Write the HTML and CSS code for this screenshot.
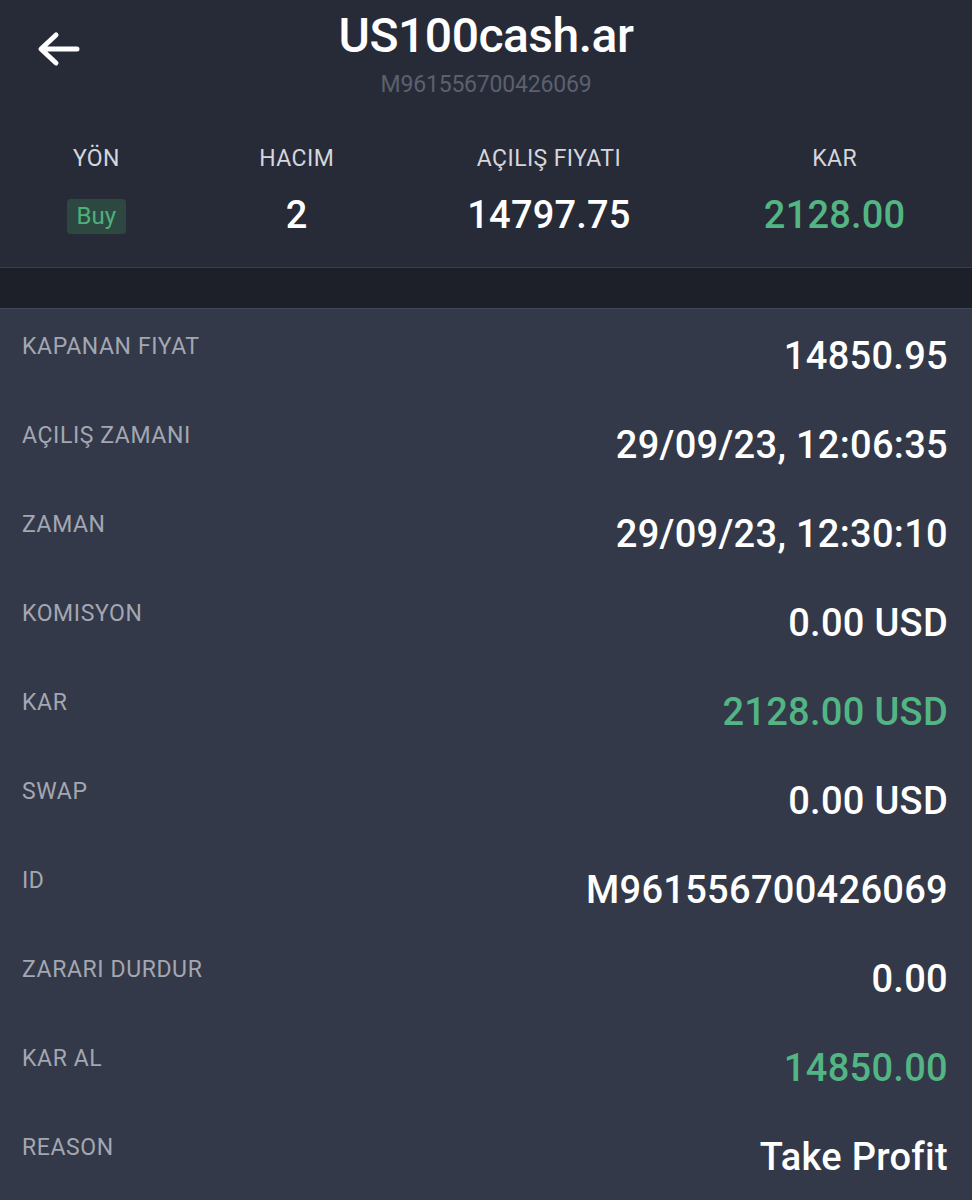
FILE: index.html
```html
<!DOCTYPE html>
<html lang="tr">
<head>
    <meta charset="UTF-8">
    <meta name="viewport" content="width=device-width, initial-scale=1.0">
    <title>US100cash.ar</title>
    <link rel="stylesheet" href="styles.css">
</head>
<body>
    <div class="top">
        <div class="header">
            <button class="back" aria-label="Geri">
                <svg width="46" height="38" viewBox="0 0 46 38">
                    <path d="M41 19H6M20 5L5 19L20 33" fill="none" stroke="#fff" stroke-width="5" stroke-linecap="round" stroke-linejoin="round"/>
                </svg>
            </button>
            <div class="title">US100cash.ar</div>
            <div class="subtitle">M961556700426069</div>
        </div>

        <div class="stats">
            <div class="stat">
                <div class="stat-label">YÖN</div>
                <div class="badge">Buy</div>
            </div>
            <div class="stat">
                <div class="stat-label">HACIM</div>
                <div class="stat-value">2</div>
            </div>
            <div class="stat">
                <div class="stat-label">AÇILIŞ FIYATI</div>
                <div class="stat-value">14797.75</div>
            </div>
            <div class="stat">
                <div class="stat-label">KAR</div>
                <div class="stat-value green">2128.00</div>
            </div>
        </div>
    </div>

    <div class="gap"></div>

    <div class="details">
        <div class="row"><span class="label">KAPANAN FIYAT</span><span class="value">14850.95</span></div>
        <div class="row"><span class="label">AÇILIŞ ZAMANI</span><span class="value">29/09/23, 12:06:35</span></div>
        <div class="row"><span class="label">ZAMAN</span><span class="value">29/09/23, 12:30:10</span></div>
        <div class="row"><span class="label">KOMISYON</span><span class="value">0.00 USD</span></div>
        <div class="row"><span class="label">KAR</span><span class="value green">2128.00 USD</span></div>
        <div class="row"><span class="label">SWAP</span><span class="value">0.00 USD</span></div>
        <div class="row"><span class="label">ID</span><span class="value">M961556700426069</span></div>
        <div class="row"><span class="label">ZARARI DURDUR</span><span class="value">0.00</span></div>
        <div class="row"><span class="label">KAR AL</span><span class="value green">14850.00</span></div>
        <div class="row"><span class="label">REASON</span><span class="value">Take Profit</span></div>
    </div>
</body>
</html>
```

FILE: styles.css
```css
body { margin: 0; background: #333949; font-family: Roboto, "Liberation Sans", sans-serif; color: #fff; }

.top { background: #272b38; height: 267px; border-bottom: 1px solid #3a3f4b; }
.header { position: relative; text-align: center; padding-top: 8px; }
.back { position: absolute; left: 36px; top: 30px; background: none; border: 0; padding: 0; }
.title { font-size: 48px; line-height: 56px; font-weight: 500; letter-spacing: -0.5px; }
.subtitle { font-size: 23px; line-height: 28px; color: #5b606e; margin-top: 7px; letter-spacing: -0.2px; }

.stats { display: flex; justify-content: space-around; margin-top: 48px; }
.stat { display: flex; flex-direction: column; align-items: center; }
.stat-label { font-size: 23px; line-height: 23px; color: #d4d6dc; letter-spacing: 0.4px; }
.stat-value { font-size: 38px; line-height: 38px; margin-top: 26px; font-weight: 500; letter-spacing: 0.2px; }
.badge { margin-top: 29px; padding: 0 10px; height: 35px; line-height: 35px; font-size: 24px; border-radius: 4px; background: #2c4841; color: #4fb07c; }

.green { color: #52b583; }

.gap { height: 40px; background: #1d2029; border-bottom: 1px solid #424858; }

.details { padding: 0 24px 0 22px; }
.row { display: flex; justify-content: space-between; align-items: flex-start; height: 89px; padding-top: 26px; box-sizing: border-box; }
.label { font-size: 23px; line-height: 23px; color: #a3a7b1; letter-spacing: 0.6px; }
.value { font-size: 38px; line-height: 38px; margin-top: 2px; font-weight: 500; letter-spacing: 0.3px; }
```
